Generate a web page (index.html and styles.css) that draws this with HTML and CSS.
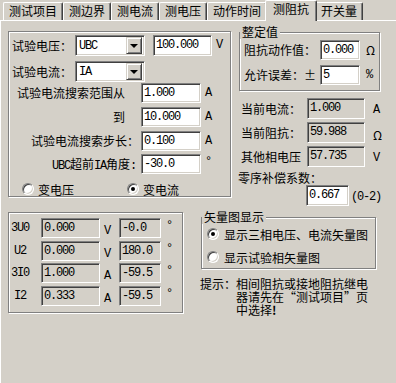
FILE: index.html
```html
<!DOCTYPE html>
<html lang="zh-CN">
<head>
    <meta charset="UTF-8">
    <title>测阻抗</title>
    <link rel="stylesheet" href="styles.css">
</head>
<body>
    <div class="tabs">
        <span class="tab">测试项目</span>
        <span class="tab">测边界</span>
        <span class="tab">测电流</span>
        <span class="tab">测电压</span>
        <span class="tab">动作时间</span>
        <span class="tab active">测阻抗</span>
        <span class="tab">开关量</span>
    </div>

    <div class="panel">
        <div class="top">
            <div class="group search">
                <div class="row r1">
                    <span class="lbl lbl-short">试验电压：</span>
                    <div class="combo"><span class="m">UBC</span><span class="drop"></span></div>
                    <div class="edit m volt">100.000</div>
                    <span class="unit m">V</span>
                </div>
                <div class="row r2">
                    <span class="lbl lbl-short">试验电流：</span>
                    <div class="combo"><span class="m">IA</span><span class="drop"></span></div>
                </div>
                <div class="row r3">
                    <span class="lbl lbl-long from">试验电流搜索范围从</span>
                    <div class="edit m num">1.000</div>
                    <span class="unit m">A</span>
                </div>
                <div class="row r4">
                    <span class="lbl lbl-long to">到</span>
                    <div class="edit m num">10.000</div>
                    <span class="unit m">A</span>
                </div>
                <div class="row r5">
                    <span class="lbl lbl-long step">试验电流搜索步长：</span>
                    <div class="edit m num">0.100</div>
                    <span class="unit m">A</span>
                </div>
                <div class="row r6">
                    <span class="lbl lbl-long angle"><span class="m">UBC</span>超前<span class="m">IA</span>角度<span class="m">:</span></span>
                    <div class="edit m num">-30.0</div>
                    <span class="unit m deg">°</span>
                </div>
                <div class="radios">
                    <span class="opt first"><span class="radio"></span>变电压</span>
                    <span class="opt"><span class="radio on"></span>变电流</span>
                </div>
            </div>

            <div class="side">
                <div class="group setting">
                    <span class="legend">整定值</span>
                    <div class="srow">
                        <span class="slbl">阻抗动作值：</span>
                        <div class="edit m small">0.000</div>
                        <span class="unit">Ω</span>
                    </div>
                    <div class="srow">
                        <span class="slbl">允许误差：±</span>
                        <div class="edit m small">5</div>
                        <span class="unit m">%</span>
                    </div>
                </div>

                <div class="read first">
                    <span class="rlbl">当前电流：</span>
                    <div class="edit m ro rfield">1.000</div>
                    <span class="unit m runit">A</span>
                </div>
                <div class="read">
                    <span class="rlbl">当前阻抗：</span>
                    <div class="edit m ro rfield">59.988</div>
                    <span class="unit runit">Ω</span>
                </div>
                <div class="read">
                    <span class="rlbl">其他相电压</span>
                    <div class="edit m ro rfield">57.735</div>
                    <span class="unit m runit">V</span>
                </div>

                <div class="zero-lbl">零序补偿系数：</div>
                <div class="zero">
                    <div class="edit m zfield">0.667</div>
                    <span class="m range">(0-2)</span>
                </div>
            </div>
        </div>

        <div class="bottom">
            <div class="group vals">
                <div class="vr">
                    <span class="vlbl m">3U0</span>
                    <div class="edit m ro v1">0.000</div>
                    <span class="vunit m">V</span>
                    <div class="edit m ro v2">-0.0</div>
                    <span class="vdeg m">°</span>
                </div>
                <div class="vr">
                    <span class="vlbl m">U2</span>
                    <div class="edit m ro v1">0.000</div>
                    <span class="vunit m">V</span>
                    <div class="edit m ro v2">180.0</div>
                    <span class="vdeg m">°</span>
                </div>
                <div class="vr">
                    <span class="vlbl m">3I0</span>
                    <div class="edit m ro v1">1.000</div>
                    <span class="vunit m">A</span>
                    <div class="edit m ro v2">-59.5</div>
                    <span class="vdeg m">°</span>
                </div>
                <div class="vr">
                    <span class="vlbl m">I2</span>
                    <div class="edit m ro v1">0.333</div>
                    <span class="vunit m">A</span>
                    <div class="edit m ro v2">-59.5</div>
                    <span class="vdeg m">°</span>
                </div>
            </div>

            <div class="side-bottom">
                <div class="group vec">
                    <span class="legend">矢量图显示</span>
                    <div class="vopt"><span class="radio on"></span>显示三相电压、电流矢量图</div>
                    <div class="vopt second"><span class="radio"></span>显示试验相矢量图</div>
                </div>
                <div class="hint">
                    <span class="hint-title">提示：</span>
                    <div class="hint-body">
                        <div>相间阻抗或接地阻抗继电</div>
                        <div>器请先在“测试项目”页</div>
                        <div>中选择<b>!</b></div>
                    </div>
                </div>
            </div>
        </div>
    </div>
</body>
</html>
```

FILE: styles.css
```css
* {
    box-sizing: border-box;
}
body {
    margin: 0;
    width: 396px;
    height: 383px;
    overflow: hidden;
    background: #d4d0c8;
    color: #000;
    font-family: "Noto Sans CJK SC", "Noto Sans", sans-serif;
    font-size: 12px;
}
.m {
    font-family: "Liberation Mono", "DejaVu Sans Mono", monospace;
    font-size: 12px;
    letter-spacing: -1.2px;
}

/* tab strip */
.tabs {
    display: flex;
    align-items: flex-end;
    height: 20px;
    padding-left: 3px;
}
.tab {
    height: 18px;
    padding: 0 5px;
    line-height: 16px;
    white-space: nowrap;
    border: 1px solid;
    border-bottom: none;
    border-color: #fff #404040 #fff #fff;
    border-radius: 2px 2px 0 0;
    box-shadow: inset -1px 0 0 #808080;
}
.tab.active {
    position: relative;
    z-index: 1;
    height: 21px;
    margin: 0 -2px -1px;
    padding: 0 7px;
    background: #d4d0c8;
}

.panel {
    height: 363px;
    border-top: 1px solid #fff;
    border-left: 1px solid #fff;
    padding: 10px 0 0 7px;
}
.top {
    display: flex;
    align-items: flex-start;
    gap: 7px;
    height: 175px;
}
.bottom {
    display: flex;
    align-items: flex-start;
    gap: 18px;
    margin-top: 6px;
}

/* etched group box */
.group {
    position: relative;
    border: 1px solid #808080;
    box-shadow: inset 1px 1px 0 #fff, 1px 1px 0 #fff;
}
.legend {
    position: absolute;
    top: -8px;
    left: 0;
    padding: 0 2px;
    line-height: 14px;
    background: #d4d0c8;
    white-space: nowrap;
}

/* sunken controls */
.edit, .combo {
    border: 1px solid;
    border-color: #808080 #fff #fff #808080;
    box-shadow: inset 1px 1px 0 #404040, inset -1px -1px 0 #d4d0c8;
    background: #fff;
}
.edit {
    height: 20px;
    padding: 0 2px;
    line-height: 18px;
    white-space: nowrap;
}
.edit.ro {
    background: #d4d0c8;
}
.combo {
    display: flex;
    align-items: center;
    justify-content: space-between;
    width: 70px;
    height: 21px;
    padding: 2px 2px 2px 3px;
}
.drop {
    display: flex;
    align-items: center;
    justify-content: center;
    width: 16px;
    height: 17px;
    border: 1px solid;
    border-color: #d4d0c8 #404040 #404040 #d4d0c8;
    box-shadow: inset 1px 1px 0 #fff, inset -1px -1px 0 #808080;
    background: #d4d0c8;
}
.drop::after {
    content: "";
    border-left: 4px solid transparent;
    border-right: 4px solid transparent;
    border-top: 4px solid #000;
}
.radio {
    display: flex;
    flex: none;
    align-items: center;
    justify-content: center;
    width: 12px;
    height: 12px;
    border-radius: 50%;
    border: 1px solid;
    border-color: #808080 #fff #fff #808080;
    box-shadow: inset 1px 1px 0 #404040, inset -1px -1px 0 #d4d0c8;
    background: #fff;
}
.radio.on::after {
    content: "";
    width: 4px;
    height: 4px;
    border-radius: 50%;
    background: #000;
}

/* left search box */
.search {
    flex: none;
    width: 223px;
    height: 166px;
    padding: 3px 0 0 3px;
}
.row {
    display: flex;
    align-items: flex-start;
}
.r1 { height: 26px; }
.r2 { height: 22px; }
.r3, .r4, .r6 { height: 24px; }
.r5 { height: 23px; }
.lbl {
    line-height: 21px;
    white-space: nowrap;
}
.lbl-short {
    width: 63px;
}
.lbl-long {
    width: 129px;
    line-height: 20px;
}
.from { padding-left: 5px; }
.to { text-align: right; padding-right: 16px; }
.step { text-align: right; padding-right: 2px; }
.angle { text-align: right; padding-right: 5px; }
.volt {
    width: 59px;
    height: 21px;
    margin-left: 8px;
    line-height: 19px;
}
.num {
    width: 60px;
}
.unit {
    margin-left: 4px;
    line-height: 21px;
}
.deg {
    line-height: 16px;
}
.radios {
    display: flex;
    align-items: center;
    height: 22px;
    padding-left: 10px;
}
.opt {
    display: flex;
    align-items: center;
    gap: 4px;
}
.opt.first {
    width: 105px;
}

/* right column */
.side {
    width: 150px;
}
.setting {
    width: 141px;
    height: 59px;
    margin: 1px 0 0 1px;
    padding: 7px 0 0 4px;
}
.srow {
    display: flex;
    height: 25px;
}
.slbl {
    width: 76px;
    line-height: 20px;
    white-space: nowrap;
}
.small {
    width: 40px;
}
.srow .unit {
    margin-left: 6px;
    line-height: 20px;
}
.read {
    display: flex;
    height: 24px;
}
.read.first {
    margin-top: 7px;
}
.rlbl {
    width: 69px;
    padding-left: 3px;
    line-height: 21px;
    white-space: nowrap;
}
.rfield {
    width: 58px;
    height: 21px;
    line-height: 19px;
}
.runit {
    margin-left: 8px;
    padding-top: 2px;
}
.zero-lbl {
    margin-top: 1px;
    line-height: 14px;
    white-space: nowrap;
}
.zero {
    display: flex;
    align-items: center;
}
.zfield {
    width: 43px;
    height: 21px;
    margin-left: 68px;
    line-height: 19px;
}
.range {
    margin-left: 2px;
    padding-top: 3px;
}

/* bottom left values */
.vals {
    flex: none;
    width: 175px;
    height: 101px;
    padding-top: 5px;
}
.vr {
    display: flex;
    height: 23px;
}
.vr:nth-child(even) {
    height: 22px;
}
.vlbl {
    width: 32px;
    padding-right: 10px;
    text-align: center;
    line-height: 20px;
}
.v1 {
    width: 59px;
}
.vunit {
    width: 19px;
    padding: 3px 0 0 4px;
    line-height: 20px;
}
.v2 {
    width: 42px;
}
.vdeg {
    padding-left: 5px;
    line-height: 16px;
}

/* bottom right */
.side-bottom {
    width: 177px;
}
.vec {
    width: 175px;
    height: 52px;
    margin-top: 5px;
    padding: 6px 0 0 5px;
}
.vopt {
    display: flex;
    align-items: center;
    gap: 5px;
    height: 20px;
    white-space: nowrap;
}
.vopt.second {
    margin-top: 3px;
}
.hint {
    display: flex;
    margin: 8px 0 0 -1px;
    line-height: 13px;
}
.hint-title {
    flex: none;
}
.hint-body {
    white-space: nowrap;
}
.hint-body div {
    height: 13px;
    overflow: visible;
}
```
